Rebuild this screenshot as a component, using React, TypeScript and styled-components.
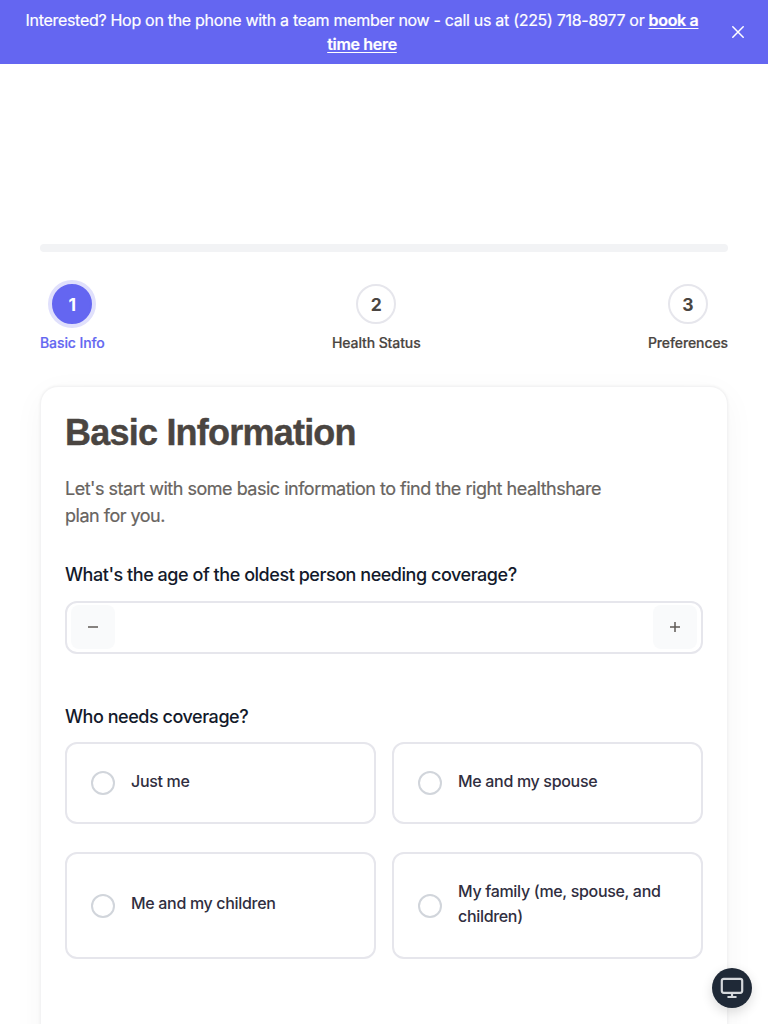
import React from 'react';
import styled, { createGlobalStyle } from 'styled-components';

const GlobalStyle = createGlobalStyle`
  *, *::before, *::after { box-sizing: border-box; }
  html, body { margin: 0; height: 1024px; overflow: hidden; background: #fff; }
  body { font-family: Inter, "Liberation Sans", sans-serif; color: #4a4541; }
  button { font: inherit; border: 0; padding: 0; background: none; cursor: pointer; }
  h1, p { margin: 0; }
`;

const Page = styled.div`
  height: 1024px;
  overflow: hidden;
`;

const Banner = styled.header`
  display: flex;
  align-items: center;
  height: 64px;
  padding: 0 16px 0 0;
  background: #6466f1;
  color: #fff;
`;

const BannerText = styled.p`
  flex: 1;
  font-size: 16px;
  line-height: 24px;
  letter-spacing: -0.3px;
  text-align: center;
  white-space: nowrap;
  -webkit-text-stroke: 0.2px currentColor;
`;

const BannerLink = styled.a`
  color: #fff;
  font-weight: 600;
  letter-spacing: -0.32px;
  text-decoration: underline;
  text-underline-offset: 2px;
`;

const CloseButton = styled.button`
  display: grid;
  place-items: center;
  width: 28px;
  height: 28px;
  color: #fff;
`;

const Main = styled.main`
  padding: 180px 40px 0;
`;

const ProgressTrack = styled.div`
  height: 8px;
  border-radius: 4px;
  background: #f2f3f5;
`;

const Steps = styled.div`
  display: flex;
  justify-content: space-between;
  margin-top: 32px;
`;

const Step = styled.div`
  display: flex;
  flex-direction: column;
  align-items: center;
  gap: 9px;
`;

const StepCircle = styled.div<{ $active?: boolean }>`
  display: grid;
  place-items: center;
  width: 40px;
  height: 40px;
  border-radius: 50%;
  border: 2px solid ${(p) => (p.$active ? '#6466f1' : '#e6e6ec')};
  background: ${(p) => (p.$active ? '#6466f1' : '#fff')};
  box-shadow: ${(p) => (p.$active ? '0 0 0 4px #e0e0fc' : 'none')};
  color: ${(p) => (p.$active ? '#fff' : '#4a4541')};
  font-size: 17.5px;
  font-weight: 700;
`;

const StepLabel = styled.div<{ $active?: boolean }>`
  font-size: 14px;
  line-height: 20px;
  font-weight: 500;
  letter-spacing: -0.1px;
  white-space: nowrap;
  -webkit-text-stroke: 0.2px currentColor;
  color: ${(p) => (p.$active ? '#6466f1' : '#4a4541')};
`;

const Card = styled.section`
  height: 760px;
  margin-top: 33px;
  padding: 26px 24px 0;
  border: 1px solid #f3f3f4;
  border-radius: 18px;
  background: #fff;
  box-shadow: 0 0 3px rgba(0, 0, 0, 0.06), 0 8px 32px rgba(0, 0, 0, 0.04);
`;

const Title = styled.h1`
  font-family: "Liberation Sans", Arial, sans-serif;
  font-size: 36px;
  line-height: 40px;
  font-weight: 700;
  letter-spacing: -0.78px;
  color: #4a4541;
  -webkit-text-stroke: 0.4px currentColor;
`;

const Intro = styled.p`
  margin-top: 22px;
  font-size: 18px;
  line-height: 27px;
  letter-spacing: -0.49px;
  white-space: nowrap;
  color: #68645f;
  -webkit-text-stroke: 0.2px currentColor;
`;

const FieldLabel = styled.div<{ $top: number }>`
  margin-top: ${(p) => p.$top}px;
  font-size: 18px;
  line-height: 28px;
  font-weight: 500;
  letter-spacing: -0.46px;
  white-space: nowrap;
  color: #131a2b;
`;

const Stepper = styled.div`
  display: flex;
  align-items: center;
  justify-content: space-between;
  height: 53px;
  margin-top: 12px;
  padding: 0 4px 1px;
  border: 2px solid #e6e6ec;
  border-radius: 12px;
`;

const StepperButton = styled.button`
  display: grid;
  place-items: center;
  width: 44px;
  height: 44px;
  border-radius: 8px;
  background: #f9fafb;
  color: #5f5a56;
`;

const Options = styled.div`
  display: grid;
  grid-template-columns: 1fr 1fr;
  grid-template-rows: 82px 107px;
  gap: 28px 16px;
  margin-top: 11px;
`;

const Option = styled.div`
  display: flex;
  align-items: center;
  gap: 16px;
  padding: 0 24px;
  border: 2px solid #e6e6ec;
  border-radius: 12px;
  background: #fff;
`;

const Radio = styled.span`
  flex: none;
  width: 24px;
  height: 24px;
  border: 2px solid #d1d5db;
  border-radius: 50%;
`;

const OptionText = styled.span`
  padding-bottom: 4px;
  font-size: 16px;
  line-height: 25px;
  font-weight: 500;
  letter-spacing: -0.32px;
  white-space: nowrap;
  color: #302e40;
`;

const DisplayButton = styled.button`
  position: fixed;
  left: 712px;
  top: 968px;
  display: grid;
  place-items: center;
  width: 40px;
  height: 40px;
  border-radius: 50%;
  background: #1f2937;
  box-shadow: 0 4px 12px rgba(0, 0, 0, 0.14);
`;

const steps = ['Basic Info', 'Health Status', 'Preferences'];

const options: React.ReactNode[] = [
  'Just me',
  'Me and my spouse',
  'Me and my children',
  <>My family (me, spouse, and<br />children)</>,
];

export default function App() {
  return (
    <Page>
      <GlobalStyle />
      <Banner>
        <BannerText>
          Interested? Hop on the phone with a team member now - call us at (225) 718-8977 or{' '}
          <BannerLink>book a<br />time here</BannerLink>
        </BannerText>
        <CloseButton aria-label="Close">
          <svg width="12" height="12" viewBox="0 0 12 12" stroke="currentColor" strokeWidth="1.5" strokeLinecap="round">
            <path d="M.8.8l10.4 10.4M11.2.8L.8 11.2" />
          </svg>
        </CloseButton>
      </Banner>
      <Main>
        <ProgressTrack />
        <Steps>
          {steps.map((label, i) => (
            <Step key={label}>
              <StepCircle $active={i === 0}>{i + 1}</StepCircle>
              <StepLabel $active={i === 0}>{label}</StepLabel>
            </Step>
          ))}
        </Steps>
        <Card>
          <Title>Basic Information</Title>
          <Intro>
            Let's start with some basic information to find the right healthshare<br />
            plan for you.
          </Intro>
          <FieldLabel $top={32}>What's the age of the oldest person needing coverage?</FieldLabel>
          <Stepper>
            <StepperButton aria-label="Decrease">
              <svg width="10" height="10" viewBox="0 0 10 10" stroke="currentColor" strokeWidth="1.5">
                <path d="M0 5h10" />
              </svg>
            </StepperButton>
            <StepperButton aria-label="Increase">
              <svg width="10" height="10" viewBox="0 0 10 10" stroke="currentColor" strokeWidth="1.5">
                <path d="M0 5h10M5 0v10" />
              </svg>
            </StepperButton>
          </Stepper>
          <FieldLabel $top={49}>Who needs coverage?</FieldLabel>
          <Options>
            {options.map((label, i) => (
              <Option key={i}>
                <Radio />
                <OptionText>{label}</OptionText>
              </Option>
            ))}
          </Options>
        </Card>
      </Main>
      <DisplayButton aria-label="Display">
        <svg width="24" height="24" viewBox="0 0 24 24" fill="none" stroke="#d5d8dc" strokeWidth="2.2" strokeLinecap="round" strokeLinejoin="round">
          <rect x="1.8" y="2.8" width="20.4" height="14" rx="2" />
          <path d="M12 17v4M8.3 21h7.4" />
        </svg>
      </DisplayButton>
    </Page>
  );
}
